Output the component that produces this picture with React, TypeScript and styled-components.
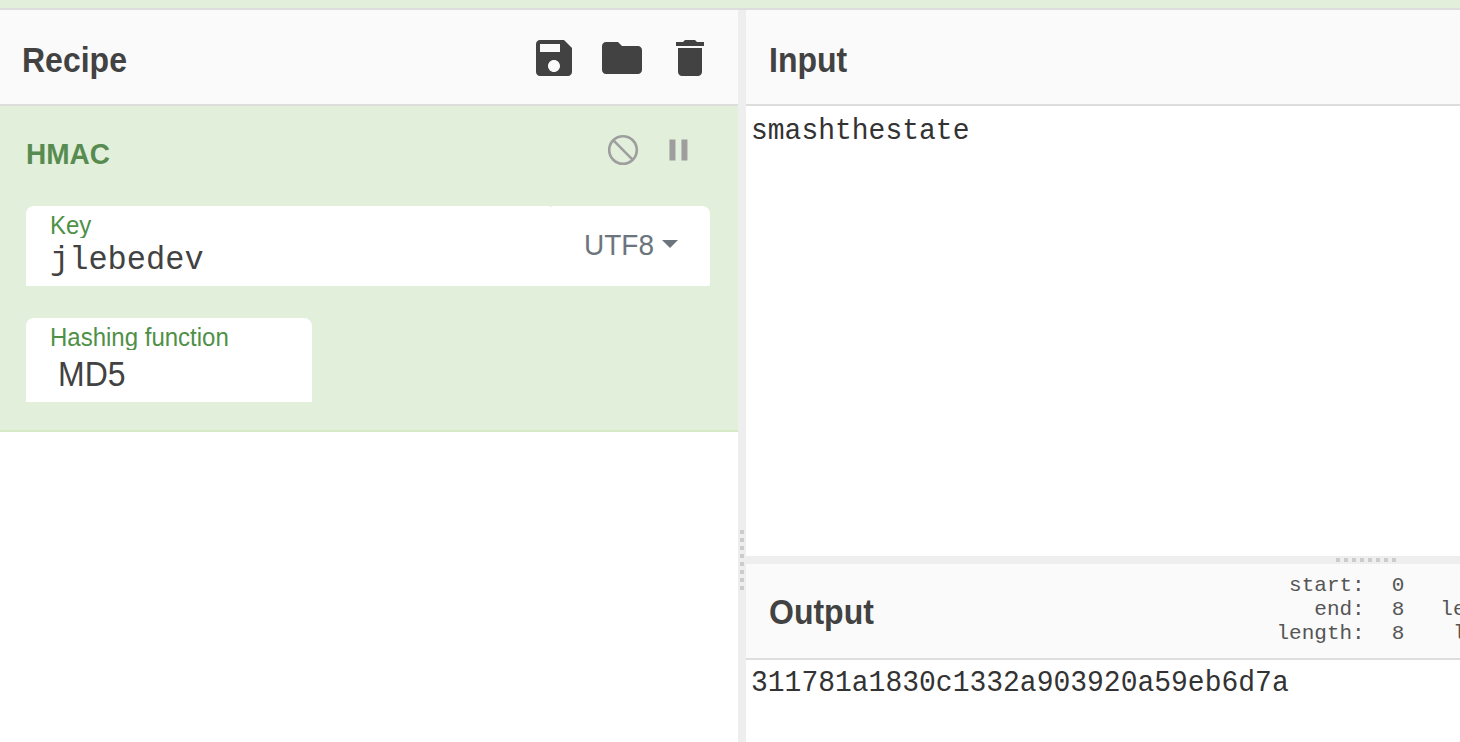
import React from "react";
import styled, { createGlobalStyle } from "styled-components";

const sans = `"Liberation Sans", Arial, sans-serif`;
const mono = `"Liberation Mono", "Courier New", monospace`;

const GlobalStyle = createGlobalStyle`
  *, *::before, *::after { box-sizing: border-box; }
  html, body { margin: 0; overflow: hidden; }
  body { background: #fff; color: #424242; font-family: ${sans}; }
`;

const Page = styled.div`
  display: flex;
  flex-direction: column;
  width: 1460px;
  height: 742px;
  overflow: hidden;
`;

const Banner = styled.div`
  flex: none;
  height: 10px;
  background: #e2efda;
  border-bottom: 2px solid #ddd;
`;

const Workspace = styled.div`
  display: flex;
  flex: 1;
  min-height: 0;
`;

const RecipePane = styled.section`
  flex: none;
  width: 738px;
`;

const IOPane = styled.section`
  display: flex;
  flex-direction: column;
  flex: 1;
  min-width: 0;
`;

const Gutter = styled.div<{ $vertical?: boolean }>`
  display: flex;
  flex: none;
  ${(p) => (p.$vertical ? "width: 8px; padding: 520px 2px 0;" : "height: 8px; padding: 2px 0 0 590px;")}
  background: #eee;
`;

const Grip = styled.div<{ $vertical?: boolean }>`
  width: ${(p) => (p.$vertical ? 4 : 60)}px;
  height: ${(p) => (p.$vertical ? 60 : 4)}px;
  background: repeating-linear-gradient(
    ${(p) => (p.$vertical ? "to bottom" : "to right")},
    #ccc 0 4px,
    transparent 4px 8px
  );
`;

/* Tall letterforms: glyphs are stretched upwards from the baseline. */
const Tall = styled.span<{ $by: number }>`
  display: inline-block;
  transform: scaleY(${(p) => p.$by});
  transform-origin: 0 80%;
`;

const TitleBar = styled.header<{ $inset: number }>`
  display: flex;
  flex: none;
  align-items: flex-start;
  justify-content: space-between;
  height: 96px;
  padding: 0 24px 0 ${(p) => p.$inset}px;
  background: #fafafa;
  border-bottom: 2px solid #ddd;
`;

const Title = styled.h2<{ $top: number }>`
  margin: ${(p) => p.$top}px 0 0;
  font-size: 32px;
  line-height: 40px;
  font-weight: bold;
`;

const Tools = styled.div`
  display: flex;
  gap: 20px;
  margin-top: 24px;
`;

const Glyph = styled.svg<{ $size: number }>`
  display: block;
  width: ${(p) => p.$size}px;
  height: ${(p) => p.$size}px;
  fill: currentColor;
`;

const Operation = styled.article`
  height: 326px;
  padding: 26px 28px 0 26px;
  background: #e2efda;
  border-bottom: 2px solid #d6e9c6;
`;

const OperationHead = styled.div`
  display: flex;
  justify-content: space-between;
  height: 74px;
`;

const OperationName = styled.h3`
  margin: 0;
  padding-top: 7px;
  color: #578b50;
  font-size: 28px;
  line-height: 32px;
`;

const OperationTools = styled.div`
  display: flex;
  gap: 19px;
  margin-right: 14px;
  color: #9e9e9e;
`;

const KeyField = styled.div`
  display: flex;
  height: 80px;
  margin-bottom: 32px;
`;

const KeyBody = styled.div`
  width: 525px;
  padding: 6px 24px 0;
  background: #fff;
  border-radius: 8px 2px 0 0;
`;

const Encoding = styled.div`
  display: flex;
  flex: 1;
  padding: 25px 0 0 33px;
  background: #fff;
  border-radius: 2px 8px 2px 0;
  color: #6c757d;
  font-size: 28px;
  line-height: 32px;
`;

const Caret = styled.i`
  width: 0;
  height: 0;
  margin: 9px 0 0 8px;
  border: 8px solid transparent;
  border-top-color: currentColor;
  border-bottom: 0;
`;

const SelectField = styled.div`
  width: 286px;
  height: 84px;
  padding: 6px 24px 0;
  background: #fff;
  border-radius: 8px 8px 0 0;
`;

const Label = styled.div`
  height: 26px;
  overflow: hidden;
  color: #4f9048;
  font-size: 24px;
  line-height: 28px;
`;

const KeyValue = styled.div`
  padding-top: 5px;
  font-family: ${mono};
  font-size: 32px;
  line-height: 36px;
`;

const SelectValue = styled.div`
  padding: 7px 0 0 8px;
  font-size: 32px;
  line-height: 36px;
`;

const DataText = styled.div<{ $height?: number; $top: number }>`
  flex: none;
  ${(p) => p.$height && `height: ${p.$height}px;`}
  padding: ${(p) => p.$top}px 5px 0;
  color: #333;
  font-family: ${mono};
  font-size: 28px;
  line-height: 32px;
`;

const Stats = styled.div`
  display: flex;
  flex: none;
  width: 159.5px;
  margin-top: 10px;
  font-family: ${mono};
  font-size: 21px;
  line-height: 24px;
  color: #555;
`;

const StatsColumn = styled.pre<{ $gap: number }>`
  flex: none;
  margin: 0 ${(p) => p.$gap}px 0 0;
  font: inherit;
  text-align: right;
`;

const icons = {
  save: "M17 3H5c-1.11 0-2 .9-2 2v14c0 1.1.89 2 2 2h14c1.1 0 2-.9 2-2V7l-4-4zm-5 16c-1.66 0-3-1.34-3-3s1.34-3 3-3 3 1.34 3 3-1.34 3-3 3zm3-10H5V5h10v4z",
  folder: "M10 4H4c-1.1 0-1.99.9-1.99 2L2 18c0 1.1.9 2 2 2h16c1.1 0 2-.9 2-2V8c0-1.1-.9-2-2-2h-8l-2-2z",
  trash: "M6 19c0 1.1.9 2 2 2h8c1.1 0 2-.9 2-2V7H6v12zM19 4h-3.5l-1-1h-5l-1 1H5v2h14V4z",
  pause: "M6.3 19h4V5h-4v14zm8-14v14h4V5h-4z",
};

function Icon({ name, size }: { name: keyof typeof icons; size: number }) {
  return (
    <Glyph $size={size} viewBox="0 0 24 24" aria-hidden="true">
      <path d={icons[name]} />
    </Glyph>
  );
}

function DisableIcon() {
  return (
    <Glyph $size={36} viewBox="0 0 36 36" aria-hidden="true">
      <g fill="none" stroke="currentColor" strokeWidth="2.6">
        <circle cx="18" cy="18" r="13.8" />
        <path d="M8.2 8.2l19.6 19.6" />
      </g>
    </Glyph>
  );
}

export default function App() {
  return (
    <>
      <GlobalStyle />
      <Page>
        <Banner />
        <Workspace>
          <RecipePane>
            <TitleBar $inset={22}>
              <Title $top={31}>
                <Tall $by={1.07}>Recipe</Tall>
              </Title>
              <Tools>
                <Icon name="save" size={48} />
                <Icon name="folder" size={48} />
                <Icon name="trash" size={48} />
              </Tools>
            </TitleBar>
            <Operation>
              <OperationHead>
                <OperationName>
                  <Tall $by={1.04}>HMAC</Tall>
                </OperationName>
                <OperationTools>
                  <DisableIcon />
                  <Icon name="pause" size={36} />
                </OperationTools>
              </OperationHead>
              <KeyField>
                <KeyBody>
                  <Label>
                    <Tall $by={1.07}>Key</Tall>
                  </Label>
                  <KeyValue>
                    <Tall $by={1.04}>jlebedev</Tall>
                  </KeyValue>
                </KeyBody>
                <Encoding>
                  <Tall $by={1.04}>UTF8</Tall>
                  <Caret />
                </Encoding>
              </KeyField>
              <SelectField>
                <Label>
                  <Tall $by={1.07}>Hashing function</Tall>
                </Label>
                <SelectValue>
                  <Tall $by={1.07}>MD5</Tall>
                </SelectValue>
              </SelectField>
            </Operation>
          </RecipePane>
          <Gutter $vertical>
            <Grip $vertical />
          </Gutter>
          <IOPane>
            <TitleBar $inset={23}>
              <Title $top={31}>
                <Tall $by={1.07}>Input</Tall>
              </Title>
            </TitleBar>
            <DataText $height={450} $top={10}>
              <Tall $by={1.06}>smashthestate</Tall>
            </DataText>
            <Gutter>
              <Grip />
            </Gutter>
            <TitleBar $inset={23}>
              <Title $top={29}>
                <Tall $by={1.07}>Output</Tall>
              </Title>
              <Stats>
                <StatsColumn $gap={27}>{"start:\nend:\nlength:"}</StatsColumn>
                <StatsColumn $gap={36}>{"0\n8\n8"}</StatsColumn>
                <StatsColumn $gap={0}>{"time:\nlength:\nlines:"}</StatsColumn>
              </Stats>
            </TitleBar>
            <DataText $top={8}>
              <Tall $by={1.06}>311781a1830c1332a903920a59eb6d7a</Tall>
            </DataText>
          </IOPane>
        </Workspace>
      </Page>
    </>
  );
}
